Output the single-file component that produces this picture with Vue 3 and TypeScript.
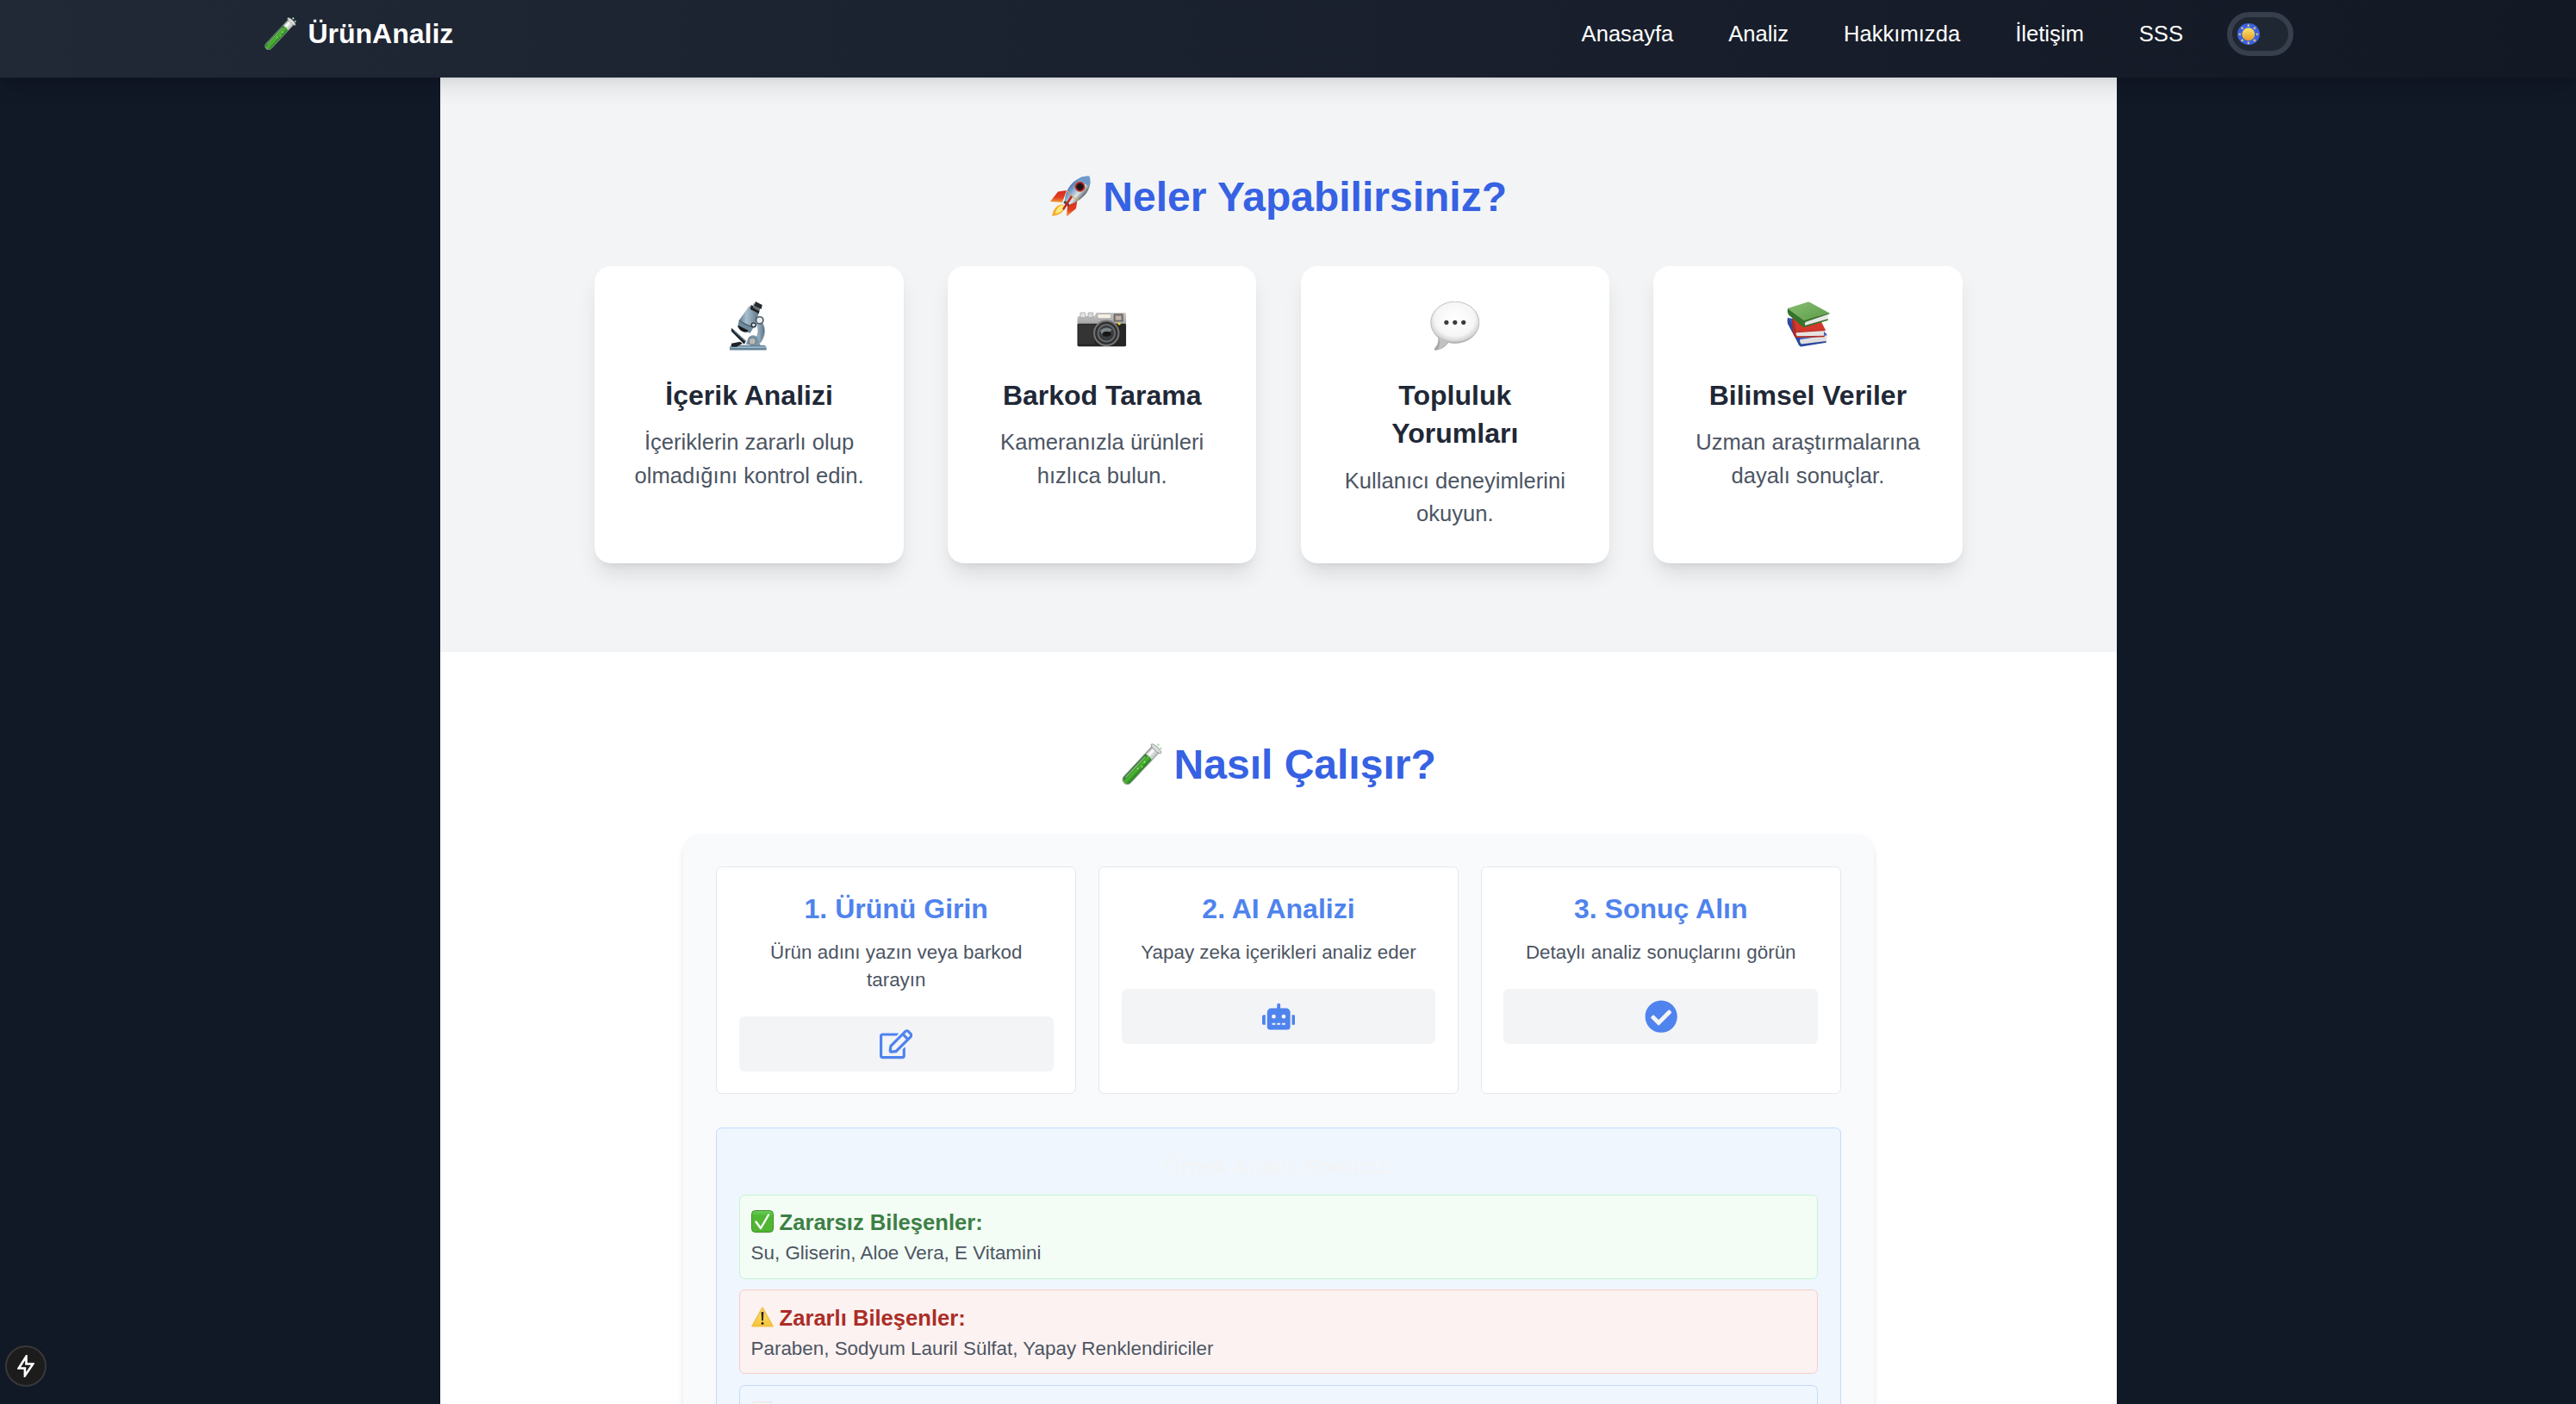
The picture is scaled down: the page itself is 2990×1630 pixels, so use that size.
<script setup lang="ts">
interface Feature {
  icon: string
  title: string
  text: string
}

interface Step {
  title: string
  text: string
  viewBox: string
  path: string
}

const links: string[] = ['Anasayfa', 'Analiz', 'Hakkımızda', 'İletişim', 'SSS']

const features: Feature[] = [
  { icon: 'microscope', title: 'İçerik Analizi', text: 'İçeriklerin zararlı olup olmadığını kontrol edin.' },
  { icon: 'camera', title: 'Barkod Tarama', text: 'Kameranızla ürünleri hızlıca bulun.' },
  { icon: 'bubble', title: 'Topluluk Yorumları', text: 'Kullanıcı deneyimlerini okuyun.' },
  { icon: 'books', title: 'Bilimsel Veriler', text: 'Uzman araştırmalarına dayalı sonuçlar.' },
]

const steps: Step[] = [
  {
    title: '1. Ürünü Girin',
    text: 'Ürün adını yazın veya barkod tarayın',
    viewBox: '0 0 576 512',
    path: 'M402.3 344.9l32-32c5-5 13.7-1.5 13.7 5.7V464c0 26.5-21.5 48-48 48H48c-26.5 0-48-21.5-48-48V112c0-26.5 21.5-48 48-48h273.5c7.1 0 10.7 8.6 5.7 13.7l-32 32c-1.5 1.5-3.5 2.3-5.7 2.3H48v352h352V350.5c0-2.1.8-4.1 2.3-5.6zm156.6-201.8L296.3 405.7l-90.4 10c-26.2 2.9-48.5-19.2-45.6-45.6l10-90.4L432.9 17.1c22.9-22.9 59.9-22.9 82.7 0l43.2 43.2c22.9 22.9 22.9 60 .1 82.8zM460.1 174L402 115.9 216.2 301.8l-7.3 65.3 65.3-7.3L460.1 174zm64.8-79.7l-43.2-43.2c-4.1-4.1-10.8-4.1-14.8 0L436 82l58.1 58.1 30.9-30.9c4-4.2 4-10.8-.1-14.9z',
  },
  {
    title: '2. AI Analizi',
    text: 'Yapay zeka içerikleri analiz eder',
    viewBox: '0 0 640 512',
    path: 'M32,224H64V416H32A31.96166,31.96166,0,0,1,0,384V256A31.96166,31.96166,0,0,1,32,224Zm512-48V448a64.06328,64.06328,0,0,1-64,64H160a64.06328,64.06328,0,0,1-64-64V176a79.974,79.974,0,0,1,80-80H288V32a32,32,0,0,1,64,0V96H464A79.974,79.974,0,0,1,544,176ZM264,256a40,40,0,1,0-40,40A39.997,39.997,0,0,0,264,256Zm-8,128H192v32h64Zm96,0H288v32h64ZM456,256a40,40,0,1,0-40,40A39.997,39.997,0,0,0,456,256Zm-8,128H384v32h64ZM640,256V384a31.96166,31.96166,0,0,1-32,32H576V224h32A31.96166,31.96166,0,0,1,640,256Z',
  },
  {
    title: '3. Sonuç Alın',
    text: 'Detaylı analiz sonuçlarını görün',
    viewBox: '0 0 512 512',
    path: 'M504 256c0 136.967-111.033 248-248 248S8 392.967 8 256 119.033 8 256 8s248 111.033 248 248zM227.314 387.314l184-184c6.248-6.248 6.248-16.379 0-22.627l-22.627-22.627c-6.248-6.249-16.379-6.249-22.628 0L216 308.118l-70.059-70.059c-6.248-6.248-16.379-6.248-22.628 0l-22.627 22.627c-6.248 6.248-6.248 16.379 0 22.627l104 104c6.249 6.249 16.379 6.249 22.628.001z',
  },
]
</script>

<template>
  <div class="page">
    <!-- Shared picture symbols -->
    <svg class="defs" width="0" height="0" aria-hidden="true">
      <defs>
        <linearGradient id="liquid" x1="0" y1="0" x2="1" y2="0">
          <stop offset="0" stop-color="#2a6f27" /><stop offset=".5" stop-color="#4fb634" /><stop offset="1" stop-color="#267d21" />
        </linearGradient>
        <linearGradient id="glass" x1="0" y1="0" x2="1" y2="0">
          <stop offset="0" stop-color="#8b938f" /><stop offset=".3" stop-color="#f4f6f5" /><stop offset="1" stop-color="#b9bebc" />
        </linearGradient>
        <linearGradient id="hull" x1="0" y1="0" x2="1" y2="0">
          <stop offset="0" stop-color="#4d78b4" /><stop offset=".45" stop-color="#a9c1da" /><stop offset=".65" stop-color="#e0e3e4" /><stop offset="1" stop-color="#59636a" />
        </linearGradient>
        <linearGradient id="fin" x1="0" y1="0" x2="0" y2="1">
          <stop offset="0" stop-color="#d92b1c" /><stop offset=".6" stop-color="#e0401f" /><stop offset="1" stop-color="#f3a33a" />
        </linearGradient>
        <linearGradient id="steel" x1="0" y1="0" x2="1" y2="0">
          <stop offset="0" stop-color="#5f7687" /><stop offset=".35" stop-color="#a9c0d0" /><stop offset="1" stop-color="#587183" />
        </linearGradient>
        <linearGradient id="silver" x1="0" y1="0" x2="0" y2="1">
          <stop offset="0" stop-color="#c9c9c9" /><stop offset="1" stop-color="#a3a3a3" />
        </linearGradient>
        <radialGradient id="bub" cx=".5" cy=".42" r=".58">
          <stop offset="0" stop-color="#fff" /><stop offset=".7" stop-color="#f6f6f6" /><stop offset=".9" stop-color="#d6d6d6" /><stop offset="1" stop-color="#a8a8a8" />
        </radialGradient>
        <linearGradient id="greenBook" x1="0" y1="0" x2="1" y2="1">
          <stop offset="0" stop-color="#86bd70" /><stop offset="1" stop-color="#5c9d48" />
        </linearGradient>
        <linearGradient id="ok" x1="0" y1="0" x2="0" y2="1">
          <stop offset="0" stop-color="#6fce5b" /><stop offset=".25" stop-color="#4fb836" /><stop offset="1" stop-color="#52b432" />
        </linearGradient>
        <linearGradient id="warn" x1="0" y1="0" x2="0" y2="1">
          <stop offset="0" stop-color="#fbe479" /><stop offset="1" stop-color="#f5c437" />
        </linearGradient>
        <linearGradient id="sunFill" x1="0" y1="0" x2="0" y2="1">
          <stop offset="0" stop-color="#fbe56b" /><stop offset="1" stop-color="#e69a2c" />
        </linearGradient>
      </defs>

      <symbol id="tube" viewBox="0 0 48 48">
        <g transform="rotate(43 24 24)">
          <path d="M18.800 0h11v48.500a5.500 5.500 0 0 1-11 0z" fill="url(#glass)" stroke="#7f8783" stroke-width=".8" />
          <path d="M19.400 12.500q5-2 9.800 0v36a4.900 4.900 0 0 1-9.800 0z" fill="url(#liquid)" />
          <path d="M21.200 15v33" stroke="#c6eec0" stroke-width="1.100" opacity=".65" />
          <path d="M23 3v7" stroke="#fff" stroke-width="2" />
          <ellipse cx="24.300" cy="-.5" rx="7.600" ry="2.400" fill="#d9dcda" stroke="#919795" stroke-width=".9" />
          <circle cx="25" cy="20" r="1.100" fill="#a4e688" /><circle cx="26.500" cy="26" r=".9" fill="#9ade80" /><circle cx="24.400" cy="31" r="1" fill="#9ade80" />
        </g>
        <circle cx="43.400" cy="1.800" r="1.400" fill="#a9e2a9" /><circle cx="46.400" cy="6" r="1.200" fill="#a9e2a9" />
      </symbol>

      <symbol id="rocket" viewBox="0 0 48 48">
        <path d="M14 33C6 34 3 41 2 47c6-1 14-3 15-11z" fill="#f4ae35" />
        <path d="M14 34c-5 1-7 6-8 10 5-1 9-3 10-8z" fill="#fdeb7c" />
        <path d="M19 17l-10 1.500L0 30l14 1z" fill="url(#fin)" />
        <path d="M31.500 28l-1.500 10-11 9.500 1-13z" fill="url(#fin)" />
        <g transform="translate(1.500 -.5) rotate(40 24 24)">
          <path d="M24.500-6.500c8 5 10.500 14 10 21.500-.5 8-3.500 15-6.500 19h-7c-4-5-6.500-12-6.500-19 0-8 3-16.500 10-21.500z" fill="url(#hull)" />
          <path d="M24.500-6.500c4.500 3 6.500 6 7.500 9-4 2-11 2-15 0 1-3 4-6 7.500-9z" fill="#6e9bca" />
          <circle cx="24" cy="10" r="5.900" fill="#bd2c20" /><circle cx="24" cy="10" r="4" fill="#1b1618" />
          <path d="M15.500 23q9 3 17.500 0" stroke="#d7a84a" stroke-width="1" fill="none" />
          <path d="M21 33.500h7v3h-7z" fill="#454b51" />
        </g>
        <path d="M24.500 24.500l-9 14" stroke="#c4281a" stroke-width="2.400" stroke-linecap="round" />
      </symbol>

      <symbol id="microscope" viewBox="0 0 58 58">
        <path d="M39 20c8 5 11 17 3 28l-9-1c7-6 8-14 4-22z" fill="url(#steel)" stroke="#61798c" stroke-width=".6" />
        <path d="M25 50l3-8q5-5 11 0l3 10z" fill="#7d98ab" />
        <path d="M6 54q0-3 4-3h35q4 0 4 4v2H6z" fill="#64839a" /><path d="M7 53.500h41" stroke="#b4cbda" stroke-width="1.200" />
        <path d="M8 31l17 15-2 4L8 35z" fill="#1d252c" /><path d="M11 34l14 13" stroke="#70889a" stroke-width="1.200" />
        <path d="M8 49l10-2 3 2-7 4H8z" fill="#1e242a" />
        <circle cx="32.500" cy="46.500" r="5" fill="#6f8492" /><circle cx="32.500" cy="46.500" r="3.400" fill="#b9b9b2" />
        <path d="M29 5l12 6-7 19-17-8z" fill="url(#steel)" />
        <path d="M17 22l17 8-4 7-7-2-8-5z" fill="#708a9d" /><path d="M17 22q8 6 17 8" stroke="#3e505e" stroke-width="1.100" fill="none" />
        <path d="M16 28l12 6q-3 4-9 0-3-2-3-6z" fill="#17191c" />
        <path d="M31 4l10 5-1 5-10-5z" fill="#202326" /><path d="M34 2l8 5-2 4-7-4z" fill="#6c7479" /><path d="M36 0l8 4-1 5-8-4z" fill="#24282b" />
        <circle cx="41" cy="22" r="5" fill="#4b5c67" /><circle cx="41" cy="22" r="3.300" fill="#e8eef1" />
        <circle cx="34" cy="27.500" r="3.200" fill="#27323b" /><circle cx="34" cy="27.500" r="1.700" fill="#e1e8ec" />
      </symbol>

      <symbol id="camera" viewBox="0 0 58 58">
        <path d="M.5 20q0-3 3-3h17l2-4h33q2 0 2 2v12H.5z" fill="url(#silver)" />
        <rect x="4" y="13" width="6" height="6" rx="1" fill="#e3e3e3" stroke="#8a8a8a" stroke-width=".6" /><rect x="13" y="13" width="6" height="6" rx="1" fill="#d8d8d8" stroke="#8a8a8a" stroke-width=".6" />
        <rect x=".5" y="26" width="57" height="26.500" rx="1.500" fill="#262626" /><rect x="2" y="27" width="19" height="23" fill="#343434" />
        <rect x="24" y="14.500" width="16" height="5.500" rx="1.500" fill="#f4f0e5" stroke="#8d8d8d" stroke-width=".6" />
        <rect x="43.500" y="15" width="10" height="8" fill="#8c8480" stroke="#5f5b58" /><rect x="45.500" y="17" width="6" height="4.500" fill="#c0b4a8" />
        <circle cx="34.500" cy="37" r="15.300" fill="#777" /><circle cx="34.500" cy="37" r="13.300" fill="#303030" /><circle cx="34.500" cy="37" r="10.800" fill="#686c6e" /><circle cx="34.500" cy="37" r="9" fill="#383c3f" />
        <path d="M27 34q7-6 14-1l-3 3-9 2z" fill="#7d8487" /><ellipse cx="35" cy="38" rx="5" ry="3" fill="#171717" />
        <circle cx="49.500" cy="26" r="1.700" fill="#f3cf2a" />
      </symbol>

      <symbol id="bubble" viewBox="0 0 58 58">
        <path d="M9 40q2 9-4 15-1 3 3 2 9-2 14-10z" fill="#a9a9a9" />
        <ellipse cx="29" cy="24.500" rx="28.300" ry="24.300" fill="url(#bub)" stroke="#a9a9a9" stroke-width=".7" />
        <path d="M10 42q6 4 11 5-5 7-12 9 4-6 1-14z" fill="#c2c2c2" />
        <circle cx="19" cy="24.500" r="2.600" fill="#3b3b3b" /><circle cx="29" cy="24.500" r="2.600" fill="#3b3b3b" /><circle cx="39" cy="24.500" r="2.600" fill="#3b3b3b" />
      </symbol>

      <symbol id="books" viewBox="0 0 58 58">
        <path d="M5 19l9 2 33 13 4 5-33 12z" fill="#3b55b4" />
        <path d="M18 43l33-4-1 9-30 4q-3-4-2-9z" fill="#dfdfdf" />
        <path d="M5 19q-1 4 0 7l14 26q1 1 3 .7L50 48v-1.800l-29 3.600q-3-3-1-7z" fill="#2c479f" />
        <path d="M19 42l31-4 1 1.600-32 5z" fill="#3d5cc0" />
        <path d="M11 19l30-2 8 16-34 3z" fill="#d5382a" />
        <path d="M15 35l33-1.500-1 7.500-32 1q-2-3 0-7z" fill="#e6e4e2" />
        <path d="M11 18l4 17q-1 3 1 5.500l32-.5v1.600l-33 .7q-3-1-4-6.500L10 22z" fill="#b12b22" />
        <path d="M14 34.500l35-2v1.700l-34 2.300z" fill="#c2352a" />
        <path d="M5 8l23-7.300q1.500-.5 3 .3L53 13l-29 10z" fill="url(#greenBook)" />
        <path d="M24 23l29-9-2.500 7.500L25 29q-3-2-1-6z" fill="#e8e8e6" />
        <path d="M5 8l19 14.500L53.500 13l.5 1.300-28 9.700q-2 2-.5 4L52 20.500l.5 1.300L25 30q-2 .3-3.500-1.200L6 15.500Q4 12 5 8z" fill="#34732b" />
      </symbol>
    </svg>

    <header class="header">
      <div class="brand">
        <svg class="brand-icon"><use href="#tube" /></svg>
        <span>ÜrünAnaliz</span>
      </div>
      <nav class="nav">
        <a v-for="link in links" :key="link">{{ link }}</a>
        <button class="toggle" type="button" aria-label="Tema">
          <span class="knob">
            <svg viewBox="0 0 26 26">
              <circle cx="13" cy="13" r="7.600" fill="url(#sunFill)" />
              <g fill="#f2cf72">
                <path v-for="n in 8" :key="n" d="M11.400 3.800 13 .6l1.600 3.200z" :transform="`rotate(${n * 45} 13 13)`" />
              </g>
            </svg>
          </span>
        </button>
      </nav>
    </header>

    <main class="content">
      <section class="features">
        <h2 class="heading">
          <svg class="heading-icon"><use href="#rocket" /></svg> Neler Yapabilirsiniz?
        </h2>
        <div class="feature-grid">
          <article v-for="f in features" :key="f.title" class="feature">
            <svg class="feature-icon"><use :href="'#' + f.icon" /></svg>
            <h3>{{ f.title }}</h3>
            <p>{{ f.text }}</p>
          </article>
        </div>
      </section>

      <section class="how">
        <h2 class="heading">
          <svg class="heading-icon"><use href="#tube" /></svg> Nasıl Çalışır?
        </h2>
        <div class="panel">
          <div class="step-grid">
            <article v-for="s in steps" :key="s.title" class="step">
              <h3>{{ s.title }}</h3>
              <p>{{ s.text }}</p>
              <div class="step-icon">
                <svg :viewBox="s.viewBox"><path :d="s.path" /></svg>
              </div>
            </article>
          </div>

          <div class="sample">
            <h4>Örnek Analiz Sonucu:</h4>
            <div class="result good">
              <strong>
                <svg class="mark" viewBox="0 0 26 26">
                  <rect x=".5" y=".5" width="25" height="25" rx="4" fill="url(#ok)" stroke="#3d8f29" />
                  <path d="M5.500 13.500l5.500 7.500L20 5.500" fill="none" stroke="#fff" stroke-width="2.400" stroke-linecap="round" stroke-linejoin="round" />
                </svg>
                Zararsız Bileşenler:
              </strong>
              <p>Su, Gliserin, Aloe Vera, E Vitamini</p>
            </div>
            <div class="result bad">
              <strong>
                <svg class="mark" viewBox="0 0 26 26">
                  <path d="M13 2.200L25 23.600H1z" fill="url(#warn)" stroke="#efc145" stroke-width="1.600" stroke-linejoin="round" />
                  <path d="M12 7.500h2l-.6 9.500h-.8z" fill="#1b1a14" stroke="#1b1a14" stroke-width=".8" stroke-linejoin="round" /><circle cx="13" cy="20.500" r="1.400" fill="#1b1a14" />
                </svg>
                Zararlı Bileşenler:
              </strong>
              <p>Paraben, Sodyum Lauril Sülfat, Yapay Renklendiriciler</p>
            </div>
            <div class="result note">
              <svg class="mark" viewBox="0 0 26 26">
                <rect x="2.500" y=".5" width="21" height="25" fill="#f4f4f4" stroke="#e6e6e6" />
              </svg>
            </div>
          </div>
        </div>
      </section>
    </main>

    <div class="dev-badge">
      <svg viewBox="0 0 20 26">
        <path d="M10.500 1.800L1.700 15.500h7.200v8.700l9.400-13.700h-7.800z" fill="none" stroke="#fff" stroke-width="2.600" />
      </svg>
    </div>
  </div>
</template>

<style>
html {
  font-size: 25.6px;
  background: #111826;
}
body {
  margin: 0;
  overflow: hidden;
}
</style>

<style scoped>
* {
  box-sizing: border-box;
}
.page {
  height: 1630px;
  overflow: hidden;
  font-family: "Liberation Sans", Arial, Helvetica, sans-serif;
  font-size: 1rem;
  line-height: 1.5;
  background: #111826;
}
.defs {
  position: absolute;
}
h2, h3, h4, p {
  margin: 0;
}
.header {
  position: relative;
  z-index: 2;
  display: flex;
  justify-content: space-between;
  align-items: flex-start;
  height: 90px;
  padding: 14px 328px 0 306.4px;
  color: #fff;
  background: linear-gradient(to right, #212936, #131825);
  box-shadow: 0 16px 24px -4.8px rgba(0, 0, 0, 0.1), 0 6.4px 9.6px -6.4px rgba(0, 0, 0, 0.1);
}
.brand {
  display: flex;
  align-items: center;
  gap: 13px;
  height: 50px;
  font-size: 1.25rem;
  font-weight: 700;
}
.brand-icon {
  width: 38px;
  height: 38px;
}
.nav {
  display: flex;
  align-items: center;
  gap: 2.5rem;
  height: 2rem;
}
.toggle {
  display: flex;
  align-items: center;
  width: 3rem;
  height: 2rem;
  margin: 0 0 0 -0.5rem;
  padding: 0 6px;
  border: 6px solid #373e4c;
  border-radius: 1rem;
  background: #1f2733;
}
.knob {
  display: flex;
  width: 1rem;
  height: 1rem;
  border-radius: 50%;
  background: #3a61df;
}
.knob svg {
  width: 100%;
  height: 100%;
}
.content {
  width: 76rem;
  margin-left: 511.2px;
}
.features {
  padding: 109.8px 7rem 4rem;
  background: #f3f4f6;
}
.heading {
  margin-bottom: 2rem;
  color: #3662e3;
  font-size: 1.875rem;
  font-weight: 700;
  line-height: 2.25rem;
  text-align: center;
}
.heading-icon {
  width: 48px;
  height: 48px;
  vertical-align: -7px;
}
.feature-grid {
  display: grid;
  grid-template-columns: repeat(4, 1fr);
  gap: 2rem;
}
.feature {
  display: flex;
  flex-direction: column;
  align-items: center;
  padding: 1.5rem;
  border-radius: 0.75rem;
  background: #fff;
  text-align: center;
  box-shadow: 0 16px 24px -4.8px rgba(0, 0, 0, 0.1), 0 6.4px 9.6px -6.4px rgba(0, 0, 0, 0.1);
}
.feature-icon {
  width: 57.6px;
  height: 57.6px;
  margin: 3px 0 3.4px;
}
.feature h3 {
  margin: 1rem 0 0.5rem;
  color: #1f2836;
  font-size: 1.25rem;
  line-height: 1.75rem;
}
.feature p {
  color: #4c5563;
}
.how {
  padding: 4rem 11rem;
  background: #fff;
}
.panel {
  padding: 1.5rem;
  border-radius: 0.75rem;
  background: #f9fafc;
  box-shadow: 0 6.4px 9.6px -1.6px rgba(0, 0, 0, 0.1), 0 3.2px 6.4px -3.2px rgba(0, 0, 0, 0.1);
}
.step-grid {
  display: grid;
  grid-template-columns: repeat(3, 1fr);
  gap: 1rem;
  margin-bottom: 1.5rem;
}
.step {
  padding: 1rem;
  border: 1px solid #e5e7eb;
  border-radius: 0.25rem;
  background: #fff;
  text-align: center;
}
.step h3 {
  margin-bottom: 0.5rem;
  color: #4f83ee;
  font-size: 1.25rem;
  line-height: 1.75rem;
}
.step p {
  color: #4c5563;
  font-size: 0.875rem;
  line-height: 1.25rem;
}
.step-icon {
  display: flex;
  align-items: center;
  justify-content: center;
  height: 2.5rem;
  margin-top: 1rem;
  border-radius: 0.25rem;
  background: #f3f4f6;
}
.step-icon svg {
  width: 1.5rem;
  height: 1.5rem;
  fill: #4f83ee;
}
.sample {
  padding: 1rem;
  border: 1px solid #c4dafa;
  border-radius: 0.25rem;
  background: #eff6fe;
}
.sample h4 {
  margin-bottom: 0.5rem;
  color: #f3f4f6;
  font-size: 1rem;
  text-align: center;
}
.result {
  padding: 0.5rem;
  margin-bottom: 0.5rem;
  border: 1px solid;
  border-radius: 0.25rem;
}
.result strong {
  display: flex;
  align-items: center;
  gap: 7px;
}
.result p {
  color: #4c5563;
  font-size: 0.875rem;
  line-height: 1.25rem;
}
.mark {
  width: 26px;
  height: 26px;
  margin-top: -3px;
}
.good {
  border-color: #c5f5d3;
  background: #f3fdf5;
}
.good strong {
  color: #3d7f45;
}
.bad {
  border-color: #f6cbca;
  background: #fcf2f1;
}
.bad strong {
  color: #ab2d26;
}
.note {
  height: 98px;
  border-color: #c4dafa;
}
.note .mark {
  display: block;
  margin-top: 5px;
}
.dev-badge {
  position: absolute;
  top: 1562px;
  left: 6px;
  display: flex;
  align-items: center;
  justify-content: center;
  width: 48px;
  height: 48px;
  border: 2px solid #383838;
  border-radius: 50%;
  background: #1c1c1c;
}
.dev-badge svg {
  width: 20px;
  height: 26px;
}
</style>
